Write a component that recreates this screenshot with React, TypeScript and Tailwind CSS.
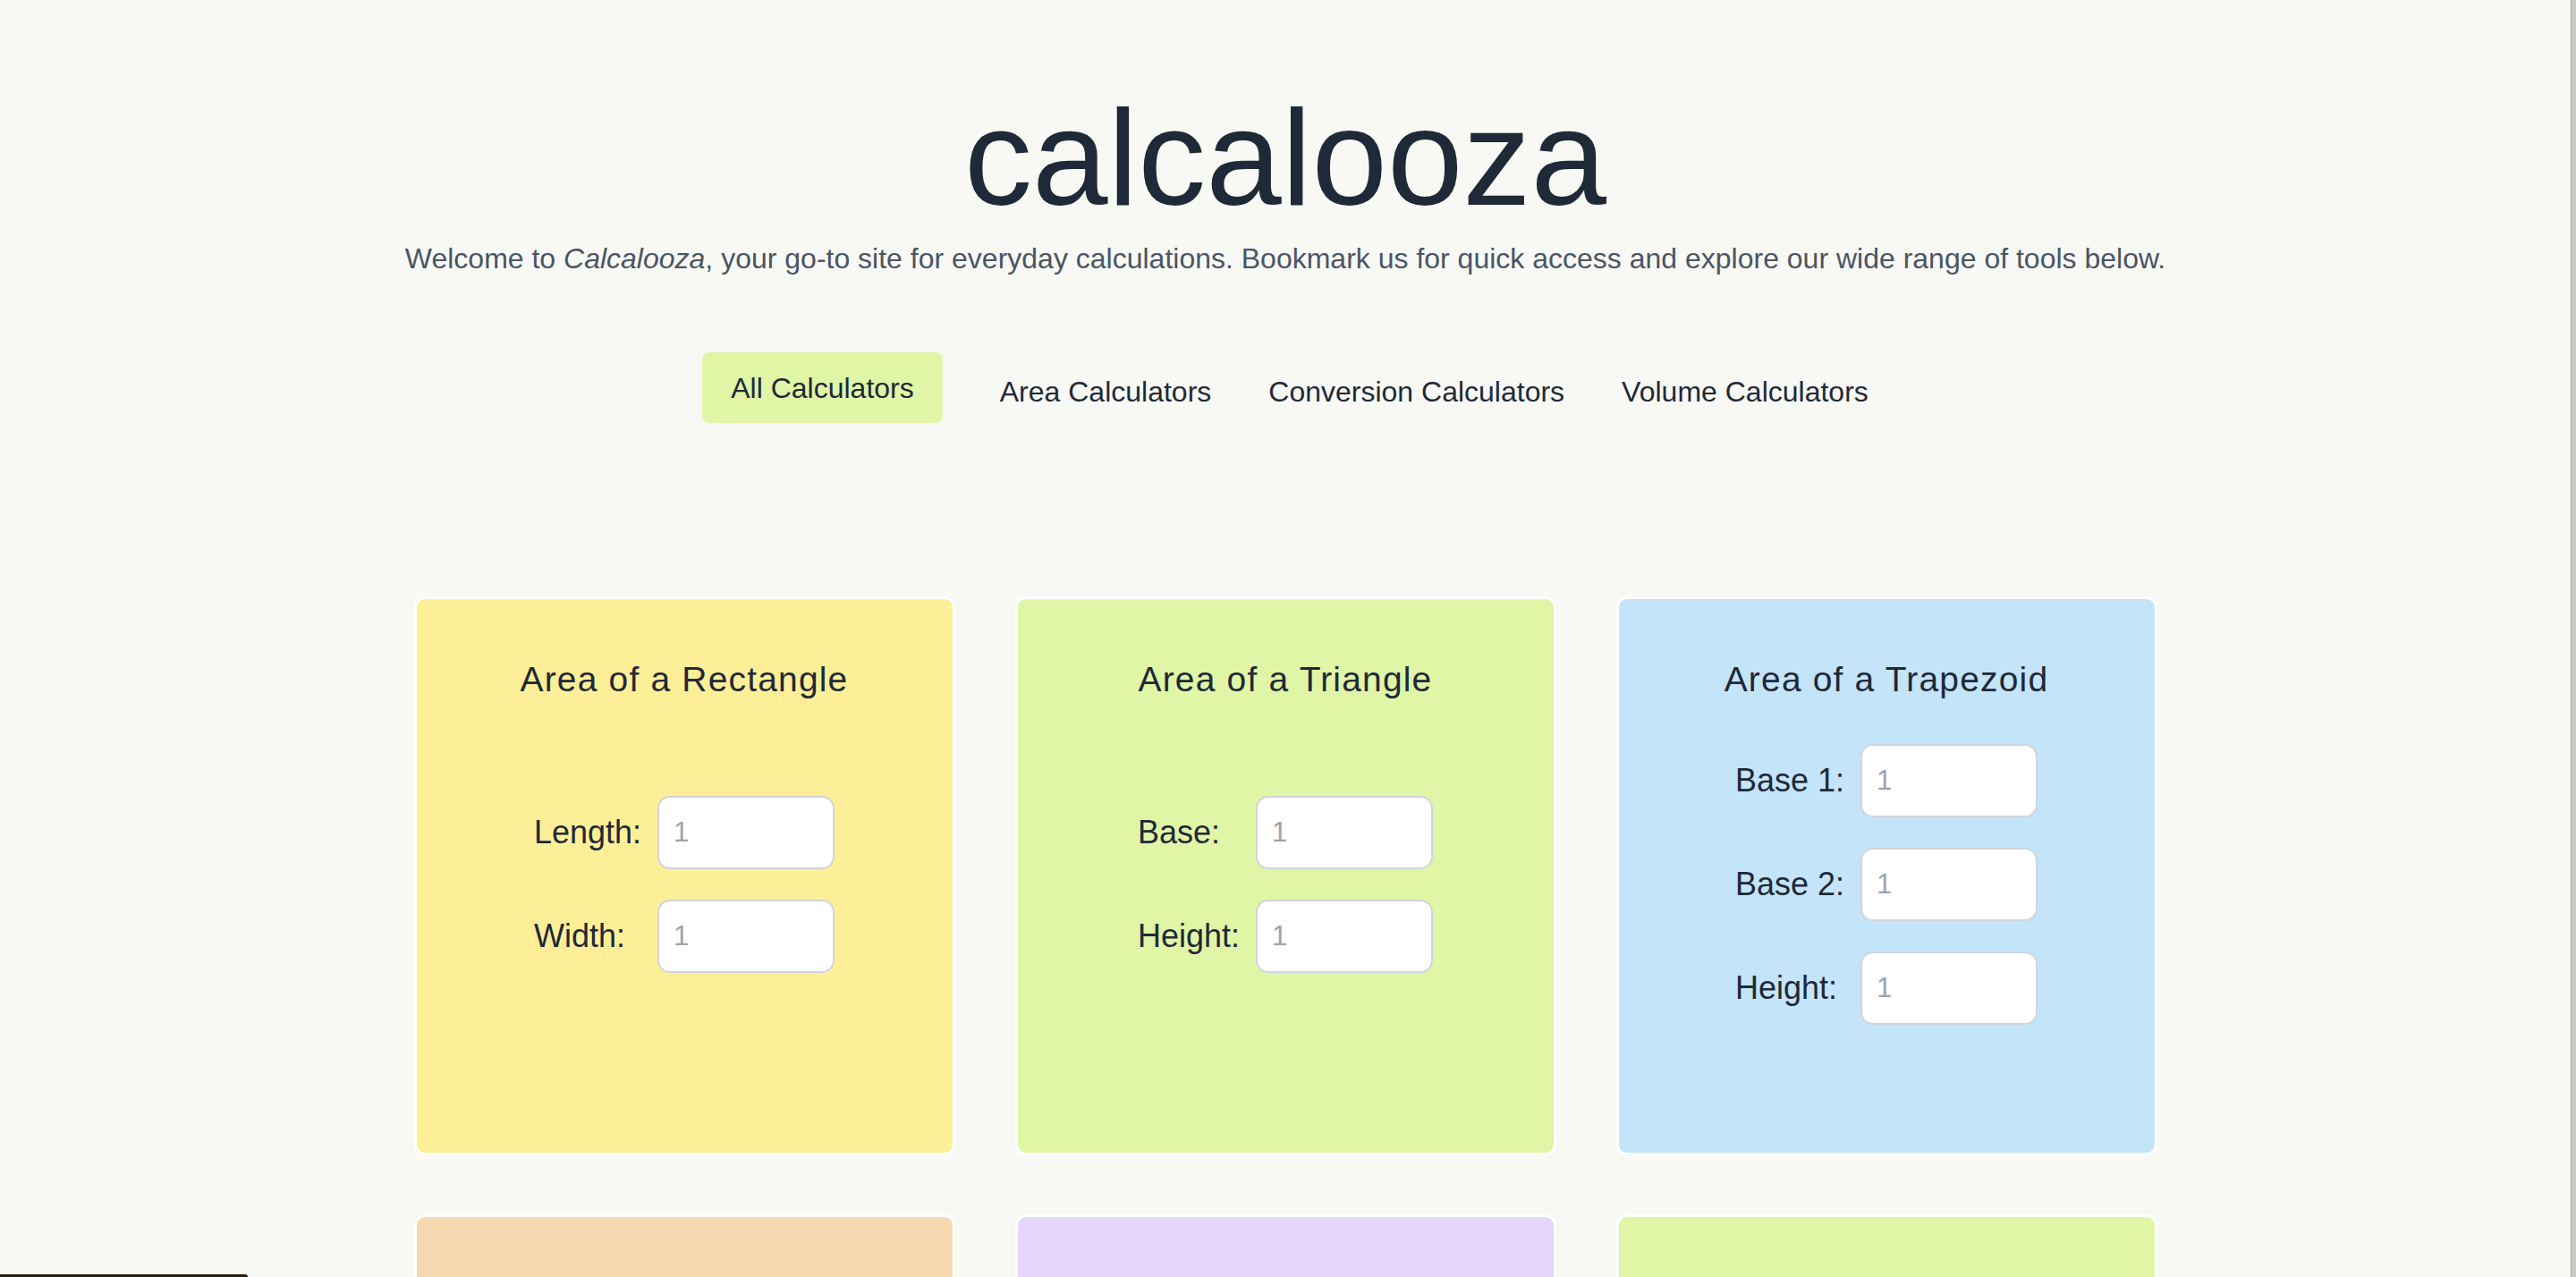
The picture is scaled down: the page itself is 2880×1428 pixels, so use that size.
import React, { useState } from "react";

const tabs = [
  "All Calculators",
  "Area Calculators",
  "Conversion Calculators",
  "Volume Calculators",
];

const calculators = [
  { title: "Area of a Rectangle", bg: "bg-[#fdef97]", fields: ["Length:", "Width:"] },
  { title: "Area of a Triangle", bg: "bg-[#e0f5a6]", fields: ["Base:", "Height:"] },
  { title: "Area of a Trapezoid", bg: "bg-[#c3e4f9]", fields: ["Base 1:", "Base 2:", "Height:"] },
  { title: "Area of a Circle", bg: "bg-[#f7d8b1]", fields: ["Radius:"] },
  { title: "Area of an Ellipse", bg: "bg-[#e6d6fb]", fields: ["Axis 1:", "Axis 2:"] },
  { title: "Area of a Parallelogram", bg: "bg-[#e0f5a6]", fields: ["Base:", "Height:"] },
];

const CalcCard = ({ title, bg, fields }: any) => {
  return (
    <div
      className={`h-[625px] flex flex-col border-[3px] border-white rounded-xl pt-[60px] pb-[102px] ${bg}`}
    >
      <h2 className="text-center text-[39px] leading-[60px] tracking-[0.03em] text-[#1f2937]">
        {title}
      </h2>
      <div className="flex-1 flex items-center justify-center">
        <div className="grid grid-cols-[auto_198px] gap-x-[18px] gap-y-[34px] items-center">
          {fields.map((f: string) => (
            <React.Fragment key={f}>
              <label className="text-[36px] text-[#1f2937]">{f}</label>
              <input
                type="text"
                placeholder="1"
                className="w-[198px] h-[82px] bg-white border-2 border-[#d1d5db] rounded-[14px] pl-[16px] text-[31px] text-[#1f2937] placeholder:text-[#9ca3af] outline-none"
              />
            </React.Fragment>
          ))}
        </div>
      </div>
    </div>
  );
};

export default function App() {
  const [active, setActive] = useState(0);

  return (
    <div className="h-screen overflow-hidden flex bg-[#f8f8f4] font-['Liberation_Sans',Arial,sans-serif]">
      <main className="flex-1 flex flex-col items-center pt-[100px]">
        <h1 className="text-[152px] leading-none text-[#1f2937]">calcalooza</h1>
        <p className="mt-[17px] text-[32px] leading-[40px] text-[#4b5563]">
          Welcome to <em>Calcalooza</em>, your go-to site for everyday
          calculations. Bookmark us for quick access and explore our wide range
          of tools below.
        </p>

        <nav className="mt-[85px] flex gap-16">
          {tabs.map((t, i) => (
            <button
              key={t}
              onClick={() => setActive(i)}
              className={`h-[79px] flex items-center rounded-lg text-[32px] text-[#1f2937] ${
                active === i ? "px-8 bg-[#e0f5a6]" : "pt-[8px]"
              }`}
            >
              {t}
            </button>
          ))}
        </nav>

        <section className="mt-[194px] grid grid-cols-[repeat(3,605px)] gap-x-[67px] gap-y-[66px]">
          {calculators.map((c) => (
            <CalcCard key={c.title} {...c} />
          ))}
        </section>
      </main>
      <div className="w-[6px] bg-[#cbcbcb] border-l border-[#a3a3a3]" />
      <div className="fixed bottom-0 left-0 h-[3px] w-[277px] bg-[#2a1a15] rounded-tr-[3px]" />
    </div>
  );
}
